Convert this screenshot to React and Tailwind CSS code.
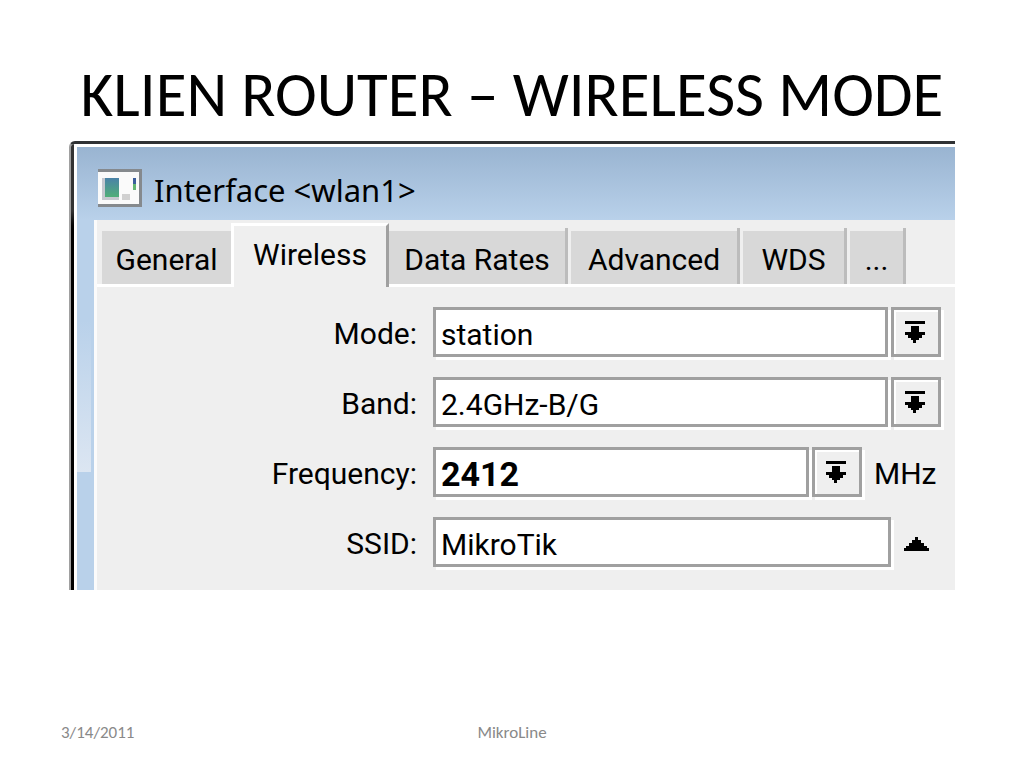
import React from "react";

function DropButton({ label }) {
  return (
    <button
      type="button"
      aria-label={label}
      className="flex h-[50px] w-[50px] shrink-0 items-center justify-center border-3 border-[#a0a0a0] bg-[#efefef] pr-[2px] shadow-[3px_3px_0_#fff,inset_2px_2px_0_#fff]"
    >
      <svg width="20" height="22" viewBox="0 0 20 22" shapeRendering="crispEdges" aria-hidden="true">
        <path d="M0 0h20v3H0zM6 5h8v6h6v3h-3v3h-3v2h-3v3H8v-3H6v-2H3v-3H0v-3h6z" />
      </svg>
    </button>
  );
}

function Row({ id, label, value, bold, children }) {
  return (
    <div className="flex h-[50px] items-center">
      <label htmlFor={id} className="w-[336px] shrink-0 pt-1 pr-4 text-right">
        {label}
      </label>
      <input
        id={id}
        type="text"
        defaultValue={value}
        className={
          "h-[50px] min-w-0 flex-1 border-3 border-[#a0a0a0] bg-white px-[5px] pt-1 shadow-[3px_3px_0_#fff] outline-none " +
          (bold ? "text-[34px] font-bold" : "")
        }
      />
      {children}
    </div>
  );
}

const tabs = [
  { name: "Data Rates", width: "w-[176px]" },
  { name: "Advanced", width: "w-[166px]" },
  { name: "WDS", width: "w-[101px]" },
  { name: "...", width: "w-[53px]" },
];

export default function App() {
  return (
    <main className="flex min-h-screen flex-col bg-white font-[Carlito,Lato,sans-serif] text-black">
      <h1 className="pt-[60px] text-center text-[63px] leading-[70px] whitespace-nowrap">
        KLIEN ROUTER – WIRELESS MODE
      </h1>

      <section className="mx-[69px] mt-[11px] flex overflow-hidden rounded-tl-[6px] border-t-3 border-l-2 border-t-[#303234] border-l-[#a0a0a0]">
        <div className="w-[3px] shrink-0 bg-gradient-to-b from-[#333] from-15% to-black to-20%" />
        <div className="flex min-w-0 flex-1 flex-col rounded-tl-[6px] border-t-3 border-l-3 border-white bg-[#b9d1ea] font-[Roboto,sans-serif] text-[30px] leading-[36px]">
          <header className="flex h-[73px] items-center gap-3 bg-gradient-to-b from-[#99b4d1] to-[#b9d1ea] pt-2 pl-[21px]">
            <svg width="44" height="38" viewBox="0 0 44 38" aria-hidden="true">
              <defs>
                <linearGradient id="screen" x1="0" y1="0" x2="0" y2="1">
                  <stop offset="0" stopColor="#4a82a8" />
                  <stop offset="1" stopColor="#4fae78" />
                </linearGradient>
              </defs>
              <path d="M0 0h44v38H0z" fill="#85898d" />
              <path d="M0 3h41v32H0z" fill="#fafafa" />
              <path d="M4 9h17v22H4z" fill="#c5c8cf" />
              <path d="M7 9h14v19H7z" fill="url(#screen)" />
              <path d="M24 25h8v6h-8z" fill="#d0d0d0" />
              <path d="M35 9h3v6h-3z" fill="#3b5d9c" />
              <path d="M35 15h3v6h-3z" fill="#63b572" />
            </svg>
            <h2 className="pt-1 font-['Noto_Sans',sans-serif] text-[31px]">Interface &lt;wlan1&gt;</h2>
          </header>

          <div className="flex">
            <div className="w-[17px] shrink-0">
              <div className="mr-[3px] h-[252px] bg-gradient-to-b from-[#b9d1ea] from-40% to-[#dce6f2]" />
            </div>
            <div className="min-w-0 flex-1 border-l-3 border-[#fbfbfb] bg-[#efefef]">
              <div role="tablist" className="flex h-[67px] items-end border-b-3 border-white pl-[5px]">
                <button type="button" role="tab" aria-selected="false" className="h-[53px] w-[129px] bg-[#d8d8d8] pt-1">
                  General
                </button>
                <button
                  type="button"
                  role="tab"
                  aria-selected="true"
                  className="-mb-[3px] h-[64px] w-[158px] border-t-3 border-r-3 border-l-3 border-t-white border-r-[#a0a0a0] border-l-white bg-[#efefef] pb-1"
                >
                  Wireless
                </button>
                {tabs.map((tab) => (
                  <div key={tab.name} className="mr-[3px] h-[56px] border-r-3 border-[#bcbcbc] pt-[3px]">
                    <button
                      type="button"
                      role="tab"
                      aria-selected="false"
                      className={"h-[53px] bg-[#d8d8d8] pt-1 whitespace-nowrap " + tab.width}
                    >
                      {tab.name}
                    </button>
                  </div>
                ))}
              </div>

              <div className="flex flex-col gap-5 pt-5 pr-[14px] pb-[23px]">
                <Row id="mode" label="Mode:" value="station">
                  <div className="ml-[3px] flex">
                    <DropButton label="Choose mode" />
                  </div>
                </Row>
                <Row id="band" label="Band:" value="2.4GHz-B/G">
                  <div className="ml-[3px] flex">
                    <DropButton label="Choose band" />
                  </div>
                </Row>
                <Row id="frequency" label="Frequency:" value="2412" bold>
                  <div className="ml-[3px] flex w-[129px] items-center gap-3">
                    <DropButton label="Choose frequency" />
                    <span className="pt-1">MHz</span>
                  </div>
                </Row>
                <Row id="ssid" label="SSID:" value="MikroTik">
                  <button type="button" aria-label="Collapse SSID" className="flex h-[50px] w-[50px] items-center justify-center pt-1">
                    <svg width="25" height="14" viewBox="0 0 25 14" shapeRendering="crispEdges" aria-hidden="true">
                      <path d="M11 0h3v3h3v3h3v3h3v2h2v3H0v-3h2V9h3V6h3V3h3z" />
                    </svg>
                  </button>
                </Row>
              </div>
            </div>
          </div>
        </div>
      </section>

      <footer className="mt-auto grid grid-cols-3 px-[61px] pb-6 text-[17px] leading-[22px] text-[#898989]">
        <span>3/14/2011</span>
        <span className="text-center">MikroLine</span>
      </footer>
    </main>
  );
}
